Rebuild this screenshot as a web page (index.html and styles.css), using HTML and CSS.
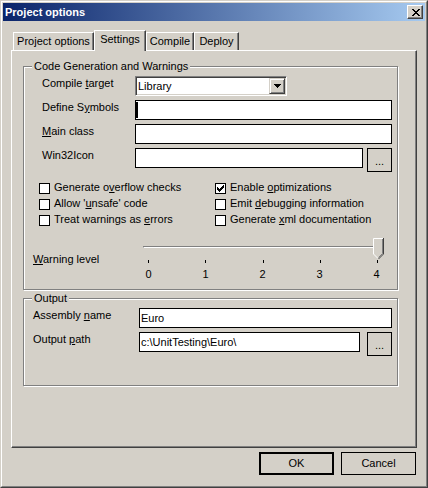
FILE: index.html
```html
<!DOCTYPE html>
<html>
<head>
<meta charset="utf-8">
<title>Project options</title>
<link rel="stylesheet" href="styles.css">
</head>
<body>
<div class="window">
  <div class="frame">
    <div class="titlebar">
      <span class="title">Project options</span>
      <button class="close" type="button" aria-label="Close">
        <svg width="8" height="7" viewBox="0 0 8 7" shape-rendering="crispEdges">
          <rect x="0" y="0" width="2" height="1"/><rect x="6" y="0" width="2" height="1"/>
          <rect x="1" y="1" width="2" height="1"/><rect x="5" y="1" width="2" height="1"/>
          <rect x="2" y="2" width="4" height="1"/>
          <rect x="3" y="3" width="2" height="1"/>
          <rect x="2" y="4" width="4" height="1"/>
          <rect x="1" y="5" width="2" height="1"/><rect x="5" y="5" width="2" height="1"/>
          <rect x="0" y="6" width="2" height="1"/><rect x="6" y="6" width="2" height="1"/>
        </svg>
      </button>
    </div>

    <div class="body">
      <div class="tabs">
        <div class="tab tab-project">Project options</div>
        <div class="tab tab-settings tab-selected">Settings</div>
        <div class="tab tab-compile">Compile</div>
        <div class="tab tab-deploy">Deploy</div>
      </div>

      <div class="panel">
        <div class="group group-code">
          <div class="legend">Code Generation and Warnings</div>

          <div class="fields fields-code">
            <div class="label">Compile <u>t</u>arget</div>
            <div class="combo">
              <span class="combo-text">Library</span>
              <span class="combo-btn">
                <svg width="7" height="4" viewBox="0 0 7 4" shape-rendering="crispEdges"><path d="M0 0h7v1h-1v1h-1v1h-1v1h-1v-1h-1v-1h-1v-1h-1z"/></svg>
              </span>
            </div>

            <div class="label">Define S<u>y</u>mbols</div>
            <div class="textbox"><span class="caret"></span></div>

            <div class="label"><u>M</u>ain class</div>
            <div class="textbox"></div>

            <div class="label">Win32Icon</div>
            <div class="field-browse">
              <div class="textbox"></div>
              <button class="browse" type="button">...</button>
            </div>
          </div>

          <div class="checks">
            <div class="check"><span class="check-box"></span><span>Generate o<u>v</u>erflow checks</span></div>
            <div class="check"><span class="check-box">
              <svg width="7" height="7" viewBox="0 0 7 7" shape-rendering="crispEdges">
                <rect x="6" y="0" width="1" height="1"/>
                <rect x="5" y="1" width="2" height="1"/>
                <rect x="0" y="2" width="1" height="1"/><rect x="4" y="2" width="3" height="1"/>
                <rect x="0" y="3" width="2" height="1"/><rect x="3" y="3" width="3" height="1"/>
                <rect x="0" y="4" width="5" height="1"/>
                <rect x="1" y="5" width="3" height="1"/>
                <rect x="2" y="6" width="1" height="1"/>
              </svg>
            </span><span>Enable <u>o</u>ptimizations</span></div>
            <div class="check"><span class="check-box"></span><span>Allow '<u>u</u>nsafe' code</span></div>
            <div class="check"><span class="check-box"></span><span>Emit <u>d</u>ebugging information</span></div>
            <div class="check"><span class="check-box"></span><span>Treat warnings as <u>e</u>rrors</span></div>
            <div class="check"><span class="check-box"></span><span>Generate <u>x</u>ml documentation</span></div>
          </div>

          <div class="level">
            <div class="level-label"><u>W</u>arning level</div>
            <div class="slider">
              <div class="slider-rail">
                <div class="slider-track"></div>
                <span class="slider-thumb">
                  <svg width="11" height="21" viewBox="0 0 11 21">
                    <polygon points="0,0 11,0 11,16 5.5,21.5 0,16" fill="#D4D0C8"/>
                    <path d="M0.5 16V0.5H10" fill="none" stroke="#fff"/>
                    <path d="M0.5 16L5 20.5" fill="none" stroke="#fff"/>
                    <path d="M10.5 0V16L5.5 21" fill="none" stroke="#404040"/>
                    <path d="M9.5 1V15.5L5.5 19.5" fill="none" stroke="#808080"/>
                  </svg>
                </span>
              </div>
              <div class="slider-ticks"><i></i><i></i><i></i><i></i><i></i></div>
              <div class="slider-nums"><span>0</span><span>1</span><span>2</span><span>3</span><span>4</span></div>
            </div>
          </div>
        </div>

        <div class="group group-output">
          <div class="legend">Output</div>
          <div class="fields fields-output">
            <div class="label">Assembly <u>n</u>ame</div>
            <div class="textbox">Euro</div>

            <div class="label">Output <u>p</u>ath</div>
            <div class="field-browse field-browse-wide">
              <div class="textbox">c:\UnitTesting\Euro\</div>
              <button class="browse" type="button">...</button>
            </div>
          </div>
        </div>
      </div>

      <div class="actions">
        <button class="btn btn-default" type="button">OK</button>
        <button class="btn" type="button">Cancel</button>
      </div>
    </div>
  </div>
</div>
</body>
</html>
```

FILE: styles.css
```css
* {
  box-sizing: border-box;
}

html,
body {
  margin: 0;
  padding: 0;
}

body {
  font: 11px/13px "Liberation Sans", Arial, sans-serif;
  color: #000;
  background: #D4D0C8;
}

u {
  text-decoration: underline;
  text-underline-offset: 1px;
}

button {
  font: inherit;
  color: #000;
  padding: 0;
  margin: 0;
  cursor: default;
}

/* window frame */
.window {
  width: 428px;
  height: 488px;
  border: 1px solid;
  border-color: #D4D0C8 #404040 #404040 #D4D0C8;
  background: #D4D0C8;
}

.frame {
  height: 100%;
  border: 1px solid;
  border-color: #fff #808080 #808080 #fff;
  padding: 1px;
  display: flex;
  flex-direction: column;
}

.titlebar {
  height: 18px;
  flex: none;
  display: flex;
  align-items: flex-start;
  justify-content: space-between;
  padding-left: 2px;
  background: linear-gradient(to right, #0A246A, #A6CAF0);
}

.title {
  color: #fff;
  font-weight: bold;
  margin-top: 3px;
}

.close {
  width: 16px;
  height: 14px;
  margin: 2px 2px 0 0;
  background: #D4D0C8;
  border: 1px solid;
  border-color: #fff #404040 #404040 #fff;
  box-shadow: inset -1px -1px 0 #808080;
  display: flex;
  align-items: center;
  justify-content: center;
  padding-left: 1px;
}

.close svg {
  display: block;
  fill: #000;
}

/* dialog body */
.body {
  flex: 1;
  padding: 9px 8px 0;
  display: flex;
  flex-direction: column;
}

.tabs {
  display: flex;
  align-items: flex-end;
  height: 20px;
  padding-left: 2px;
}

.tab {
  height: 18px;
  border-top: 1px solid #fff;
  border-left: 1px solid #fff;
  border-right: 1px solid #404040;
  box-shadow: inset -1px 0 0 #808080;
  padding-top: 2px;
  text-align: center;
  white-space: nowrap;
  background: #D4D0C8;
}

.tab-selected {
  height: 21px;
  margin-bottom: -1px;
  position: relative;
  z-index: 1;
}

.tab-project { width: 81px; }
.tab-settings { width: 52px; }
.tab-compile { width: 48px; }
.tab-deploy { width: 45px; }

.panel {
  height: 398px;
  flex: none;
  border: 1px solid;
  border-color: #fff #404040 #404040 #fff;
  box-shadow: inset -1px -1px 0 #808080;
  padding: 15px 18px 0 11px;
}

/* group boxes */
.group {
  border: 1px solid #808080;
  box-shadow: inset 1px 1px 0 #fff, 1px 1px 0 #fff;
  padding-right: 5px;
}

.group-code {
  height: 224px;
}

.group-output {
  height: 88px;
  margin-top: 8px;
}

.legend {
  display: table;
  margin: -7px 0 0 8px;
  padding: 0 2px;
  background: #D4D0C8;
}

.fields {
  display: grid;
  row-gap: 4px;
  margin-top: 3px;
  align-items: start;
}

.fields-code {
  grid-template-columns: 93px 1fr;
  padding-left: 18px;
}

.fields-output {
  grid-template-columns: 106px 1fr;
  padding-left: 9px;
}

.label {
  padding-top: 1px;
  white-space: nowrap;
}

.textbox {
  height: 20px;
  border: 1px solid #000;
  background: #fff;
  padding: 0 1px;
  display: flex;
  align-items: center;
  white-space: nowrap;
  overflow: hidden;
}

.caret {
  width: 2px;
  height: 16px;
  margin-left: -1px;
  background: #000;
}

.combo {
  width: 152px;
  height: 20px;
  border: 1px solid;
  border-color: #808080 #fff #fff #808080;
  box-shadow: inset 1px 1px 0 #404040, inset -1px -1px 0 #D4D0C8;
  background: #fff;
  padding: 1px;
  display: flex;
  align-items: stretch;
}

.combo-text {
  flex: 1;
  padding-left: 1px;
  display: flex;
  align-items: center;
}

.combo-btn {
  width: 16px;
  border: 1px solid;
  border-color: #D4D0C8 #404040 #404040 #D4D0C8;
  box-shadow: inset 1px 1px 0 #fff, inset -1px -1px 0 #808080;
  background: #D4D0C8;
  display: flex;
  align-items: center;
  justify-content: center;
}

.combo-btn svg {
  display: block;
  fill: #000;
}

.field-browse {
  display: flex;
  align-items: flex-start;
  gap: 4px;
}

.field-browse-wide {
  gap: 7px;
}

.field-browse .textbox {
  flex: 1;
}

.browse {
  width: 25px;
  height: 24px;
  flex: none;
  border: 1px solid #000;
  background: #D4D0C8;
  padding-top: 2px;
}

/* checkboxes */
.checks {
  display: grid;
  grid-template-columns: 176px 1fr;
  grid-auto-rows: 16px;
  margin-top: 9px;
  padding-left: 15px;
}

.check {
  display: flex;
  align-items: flex-start;
  gap: 4px;
  white-space: nowrap;
}

.check-box {
  width: 11px;
  height: 11px;
  flex: none;
  margin-top: 2px;
  border: 1px solid #000;
  background: #fff;
  padding: 1px;
}

.check-box svg {
  display: block;
  fill: #000;
}

/* warning level slider */
.level {
  display: flex;
  margin-top: 9px;
  padding-left: 9px;
}

.level-label {
  width: 110px;
  padding-top: 15px;
}

.slider {
  width: 241px;
}

.slider-rail {
  position: relative;
  height: 21px;
  padding-top: 8px;
}

.slider-track {
  height: 2px;
  margin-right: 2px;
  border-top: 1px solid #808080;
  border-left: 1px solid #808080;
  border-bottom: 1px solid #fff;
}

.slider-thumb {
  position: absolute;
  top: 0;
  right: 0;
  width: 11px;
  height: 21px;
}

.slider-thumb svg {
  display: block;
}

.slider-ticks {
  display: flex;
  justify-content: space-between;
  height: 4px;
  padding: 0 6px 0 5px;
}

.slider-ticks i {
  width: 1px;
  height: 3px;
  margin-top: 1px;
  background: #000;
}

.slider-nums {
  display: flex;
  justify-content: space-between;
  margin-top: 5px;
  padding-right: 2px;
}

.slider-nums span {
  width: 11px;
  text-align: center;
}

/* dialog buttons */
.actions {
  display: flex;
  justify-content: flex-end;
  gap: 7px;
  margin: 4px 1px 0 0;
}

.btn {
  width: 75px;
  height: 23px;
  border: 1px solid #000;
  background: #D4D0C8;
}

.btn-default {
  border-width: 2px;
}
```
